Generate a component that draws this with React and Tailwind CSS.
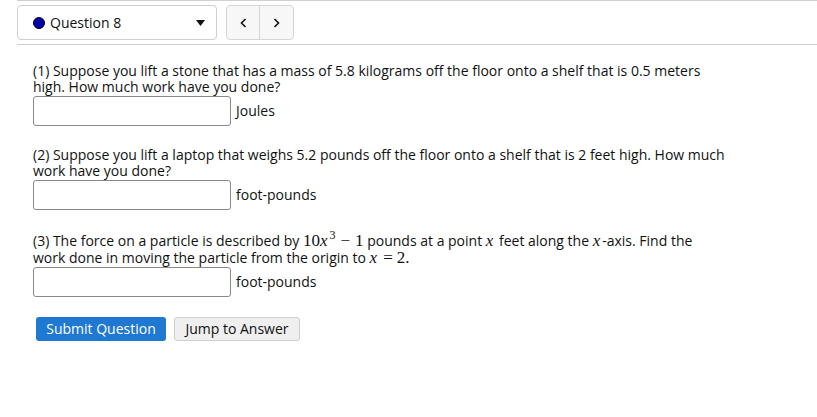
import React from "react";

function X() {
  return (
    <span className="italic mr-[2px]" style={{ fontFamily: '"Liberation Serif", serif' }}>
      x
    </span>
  );
}

function Math({ children }) {
  return (
    <span className="text-[17px] leading-none" style={{ fontFamily: '"Liberation Serif", serif' }}>
      {children}
    </span>
  );
}

function AnswerRow({ unit }) {
  return (
    <div className="flex items-center mt-[1px]">
      <div className="w-[198px] h-[30px] border border-[#8a8a8a] rounded-[3px] bg-white" />
      <span className="ml-[5px]">{unit}</span>
    </div>
  );
}

export default function App() {
  return (
    <div
      className="w-[817px] h-[417px] bg-white text-[#111] text-[14px] leading-[16px] overflow-hidden"
      style={{ fontFamily: '"Open Sans", sans-serif' }}
    >
      <div className="ml-[17px] h-[45px] border-t border-b border-[#d0d0d0] flex items-center">
        <div className="w-[200px] h-[35px] border border-[#cfcfcf] rounded-[4px] flex items-center pl-[15px] pr-[10px]">
          <span className="w-[12px] h-[12px] rounded-full bg-[#0000b0] border border-black" />
          <span className="ml-[5px] flex-1">Question 8</span>
          <svg width="9" height="6" viewBox="0 0 9 6" className="mr-[1px]">
            <path d="M0 0 L9 0 L4.5 6 Z" fill="#111" />
          </svg>
        </div>
        <div className="ml-[9px] h-[35px] flex border border-[#d6d6d6] rounded-[4px] bg-[#f7f7f7]">
          <div className="w-[33px] flex items-center justify-center border-r border-[#d6d6d6]">
            <svg width="7" height="10" viewBox="0 0 7 10">
              <path d="M5.5 1 L1.5 5 L5.5 9" fill="none" stroke="#111" strokeWidth="1.6" />
            </svg>
          </div>
          <div className="w-[33px] flex items-center justify-center">
            <svg width="7" height="10" viewBox="0 0 7 10">
              <path d="M1.5 1 L5.5 5 L1.5 9" fill="none" stroke="#111" strokeWidth="1.6" />
            </svg>
          </div>
        </div>
      </div>

      <div className="pl-[33px] pt-[18px] w-[727px]">
        <div>
          <p>
            (1) Suppose you lift a stone that has a mass of 5.8 kilograms off the floor onto a shelf that is 0.5 meters high. How much work have you done?
          </p>
          <AnswerRow unit="Joules" />
        </div>
        <div className="mt-[21px]">
          <p>
            (2) Suppose you lift a laptop that weighs 5.2 pounds off the floor onto a shelf that is 2 feet high. How much work have you done?
          </p>
          <AnswerRow unit="foot-pounds" />
        </div>
        <div className="mt-[22px]">
          <p>
            (3) The force on a particle is described by{" "}
            <Math>
              10<X />
              <span className="relative -top-[7px] text-[12px] leading-none">3</span>
              <span className="mx-[5px]">−</span>1
            </Math>{" "}
            pounds at a point <Math><X /></Math> feet along the <Math><X /></Math>-axis. Find the work done in moving the particle from the origin to{" "}
            <Math>
              <X />
              <span className="mx-[4px]">=</span>2.
            </Math>
          </p>
          <AnswerRow unit="foot-pounds" />
        </div>
        <div className="flex mt-[20px] ml-[3px] gap-[8px]">
          <button className="w-[130px] h-[24px] rounded-[3px] bg-[#1f78d1] text-white">Submit Question</button>
          <button className="w-[126px] h-[24px] rounded-[3px] bg-[#efefef] border border-[#cfcfcf] text-[#111]">Jump to Answer</button>
        </div>
      </div>
    </div>
  );
}
